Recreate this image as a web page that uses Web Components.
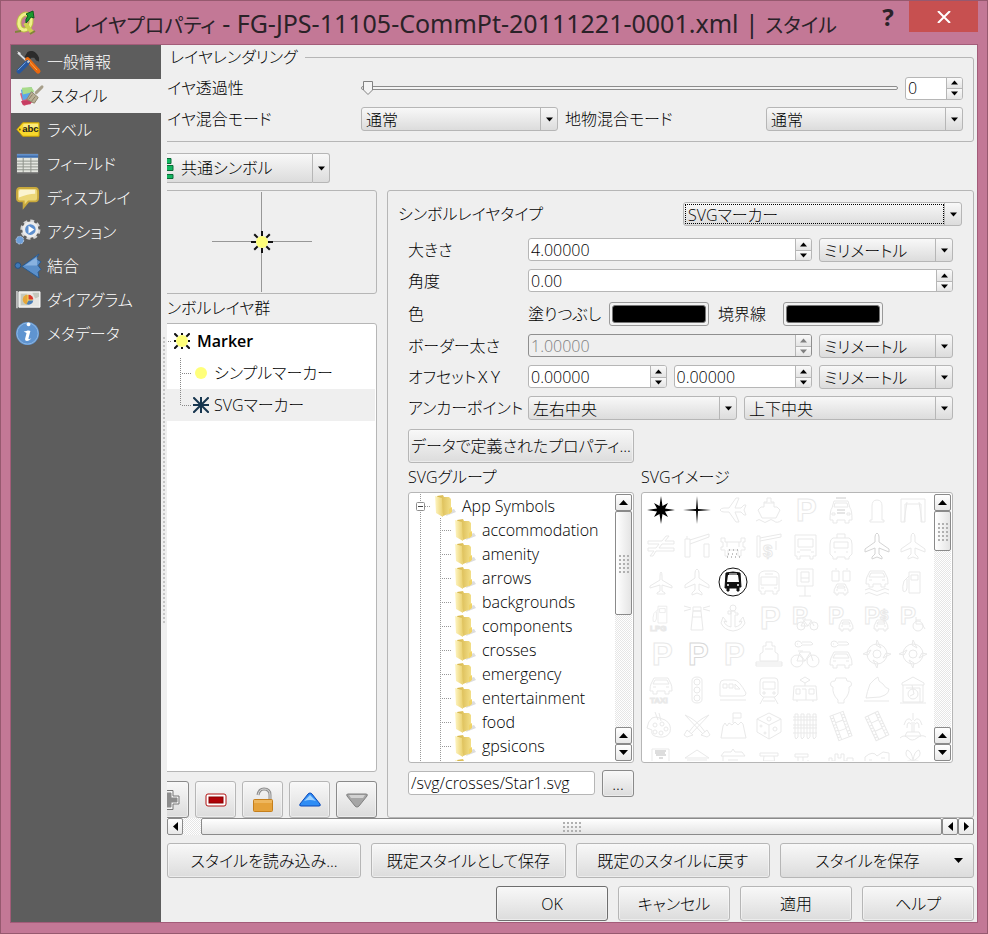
<!DOCTYPE html>
<html lang="ja">
<head>
<meta charset="utf-8">
<title>レイヤプロパティ</title>
<style>
html, body { margin: 0; height: 100%; }
body {
  --line: #b6b6b6;
  --face: #efefef;
  --btn: linear-gradient(#f8f8f8, #dcdcdc);
  font: 16px/24px "Open Sans", "Noto Sans CJK JP", sans-serif;
  font-feature-settings: "palt";
  font-weight: 300;
  color: #000;
}
</style>
</head>
<body>
<app-window></app-window>
<script>
const BASE = `*{box-sizing:border-box} :host{box-sizing:border-box;display:block} :host([hidden]){display:none}
button,input,select{font:inherit;font-feature-settings:inherit;color:inherit;margin:0}
label{white-space:nowrap}`;
function define(name, css, html, setup) {
  customElements.define(name, class extends HTMLElement {
    constructor() {
      super();
      const t = document.createElement('template');
      this.attachShadow({ mode: 'open' });
      t.innerHTML = `<style>${BASE}${css}</style>${typeof html === 'function' ? html(this) : html}`;
      this.shadowRoot.append(t.content.cloneNode(true));
      if (setup) setup(this);
    }
  });
}
const tri = (d, s = 9) => {
  const p = { up: 'M0 5 4.500 0 9 5z', down: 'M0 0H9L4.500 5z' }[d];
  if (p) return `<svg width="${s}" height="5" viewBox="0 0 9 5" aria-hidden="true"><path fill="currentColor" d="${p}"/></svg>`;
  return `<svg width="5" height="9" viewBox="0 0 5 9" aria-hidden="true"><path fill="currentColor" d="${d === 'left' ? 'M5 0V9L0 4.500z' : 'M0 0V9L5 4.500z'}"/></svg>`;
};

/* ---------- basic controls ---------- */
define('ui-button', `
:host{min-width:0}
button{display:flex;align-items:center;justify-content:center;width:100%;height:100%;padding:0 4px;border:1px solid var(--edge,var(--line));border-radius:3px;background:var(--btn);box-shadow:inset 0 0 0 1px #fafafa88;white-space:nowrap}`,
`<button type="button"><slot></slot></button>`, el => {
  const b = el.shadowRoot.querySelector('button');
  if (el.hasAttribute('label')) b.setAttribute('aria-label', el.getAttribute('label'));
});

define('ui-combo', `
:host{display:grid;grid-template-columns:1fr 17px;height:24px;min-width:0;border:1px solid var(--line);border-radius:3px;background:var(--btn)}
::slotted(select){grid-area:1/1/2/3;appearance:none;width:100%;height:22px;border:0;outline:0;background:none;padding:0 20px 0 4px;margin:0;font:inherit;font-feature-settings:inherit;line-height:22px;color:inherit}
:host([focused]) ::slotted(select){outline:1px dotted #000;outline-offset:-2px;width:calc(100% - 16px);padding-right:0}
i{grid-area:1/2;display:flex;align-items:center;justify-content:center;border-left:1px solid var(--line);pointer-events:none}`,
`<slot></slot><i>${tri('down', 7)}</i>`);

define('ui-spin', `
:host{display:grid;grid-template-columns:1fr 16px;height:23px;min-width:0;border:1px solid var(--line);border-radius:3px;background:#fff;overflow:hidden}
:host([disabled]){background:var(--face);border-color:#8f8f8f;color:#808080}
::slotted(input){width:100%;height:21px;min-width:0;border:0;outline:0;background:none;padding:0 2px;margin:0;font:inherit;color:inherit;box-sizing:border-box}
div{display:grid;grid-template-rows:1fr 1fr;border-left:1px solid var(--line)}
button{border:0;padding:0;background:linear-gradient(#fafafa,#e4e4e4);display:flex;align-items:center;justify-content:center;min-height:0}
button+button{border-top:1px solid var(--line)}`,
`<slot></slot><div><button type="button" aria-label="増やす" tabindex="-1">${tri('up', 7)}</button><button type="button" aria-label="減らす" tabindex="-1">${tri('down', 7)}</button></div>`,
el => { if (el.hasAttribute('disabled')) el.shadowRoot.querySelectorAll('button').forEach(b => { b.disabled = true; }); });

define('ui-color', `
:host{width:100px;height:24px}
button{width:100%;height:100%;padding:2px;border:1px solid #9a9a9a;border-radius:3px;background:#f2f2f2;display:flex}
i{flex:1;border-radius:3px;background:#000;border:1px solid #777}`,
el => `<button type="button" aria-label="${el.getAttribute('label')}"><i></i></button>`);

define('scroll-bar', `
:host{display:flex;flex:none;width:17px;flex-direction:column;background:repeating-conic-gradient(#e6e6e6 0 25%,#fff 0 50%) 0 0/2px 2px}
:host([horizontal]){width:auto;height:17px;flex-direction:row}
button{flex:none;width:17px;height:17px;padding:0;border:1px solid #8a8a8a;border-radius:2px;background:linear-gradient(#fff,#e8e8e8);display:flex;align-items:center;justify-content:center}
:host([horizontal]) button{width:16px}
b{flex:0 0 var(--thumb);border:1px solid #8a8a8a;border-radius:2px;background:linear-gradient(90deg,#fff,#e4e4e4);display:flex;align-items:center;justify-content:center}
:host([horizontal]) b{flex:1;margin-left:18px;background:linear-gradient(#fff,#e4e4e4)}
s{width:11px;height:19px;background:radial-gradient(circle,#b0b0b0 1px,transparent 1px) 0 0/4px 4px}
:host([horizontal]) s{width:19px;height:11px}
u{flex:1}`,
el => el.hasAttribute('horizontal')
  ? `<button aria-label="左へ">${tri('left')}</button><b><s></s></b><button aria-label="左へ">${tri('left')}</button><button aria-label="右へ">${tri('right')}</button>`
  : `<button aria-label="上へ">${tri('up')}</button><b><s></s></b><u></u><button aria-label="上へ">${tri('up')}</button><button aria-label="下へ">${tri('down')}</button>`);

/* ---------- sidebar ---------- */
const NAV = {
general: `<path d="M2 3 15 15" stroke="#d8dde2" stroke-width="2"/><path d="M1 1 5 3 4 5z" fill="#eee"/><path d="M12 2C16 0 21 1 24 8L24 12 21 11 19 8 16 8 13 11 9 7z" fill="#2b2b2b"/><path d="M12 10 23 22" stroke="#e8670e" stroke-width="5" stroke-linecap="round"/><path d="M12 10 22 21" stroke="#ffab4d" stroke-width="1"/><path d="M3 22 12 13" stroke="#27579f" stroke-width="5" stroke-linecap="round"/><path d="M2 21 10 13" stroke="#7ea6dc" stroke-width="1"/><path d="M12 13 14 11" stroke="#ccc" stroke-width="2"/>`,
style: `<path d="M1 10 13 6 17 18 5 23z" fill="#dd5f7a"/><path d="M2 6 13 3 16 13 4 17z" fill="#5aa7e8"/><path d="M3 4 13 3 16 8 4 11z" fill="#a9db8a"/><path d="M2 18 14 16 12 21 4 22z" fill="#c73d63"/><path d="M24 3 18 9" stroke="#a79f8a" stroke-width="3" stroke-linecap="round"/><path d="M13 8 20 14 16 20 8 16z" fill="#b9af95" stroke="#8d8468"/><path d="M10 16 14 11M13 18 17 13" stroke="#857c62"/>`,
label: `<path d="M7 5H24V19H7L1 12z" fill="#f8d82c" stroke="#d0a400"/><path d="M8 6H23V10H7z" fill="#fbe97c"/><circle cx="4" cy="12" r="1" fill="#7d6400"/><text x="15" y="15" font-family="Liberation Sans" font-weight="700" font-size="10" text-anchor="middle" fill="#222">abc</text>`,
field: `<path d="M1 2H23V22H1z" fill="#e3e5df"/><path d="M1 2H23V6H1z" fill="#3f6fb0"/><path d="M1 3H23" stroke="#7ea7dc"/><path d="M1 9.500H23M1 12.500H23M1 15.500H23M1 18.500H23M7.500 6V22M15.500 6V22" stroke="#8d918a"/><path d="M1 21.500H23" stroke="#777"/>`,
display: `<path d="M4 2H20Q23 2 23 6V12Q23 16 20 16H13L8 22 8 16H4Q1 16 1 12V6Q1 2 4 2z" fill="#ecd777" stroke="#c9a93c" stroke-width="2"/><path d="M4 4H20V8Q12 8 3 12V6z" fill="#fbf4cf"/>`,
action: `<circle cx="15" cy="10" r="9" fill="none" stroke="#d5d5d5" stroke-width="3" stroke-dasharray="4 3"/><circle cx="15" cy="10" r="7" fill="#5d8fce" stroke="#ececec" stroke-width="3"/><path d="M13 6 19 10 13 14z" fill="#fff"/><circle cx="4" cy="21" r="4" fill="#6f9fd8" stroke="#b8c6d8" stroke-width="1" stroke-dasharray="2 1"/>`,
join: `<path d="M24 0 21 5 26 8 23 12 26 16 23 19 24 25 6 13z" fill="#5b8fc9" stroke="#27598f"/><path d="M22 3 9 12H22z" fill="#9dc1e8" opacity=".7"/><circle cx="2" cy="12" r="3" fill="#3f79b8" stroke="#244f7e"/>`,
diagram: `<path d="M3 4H25V20H3z" fill="#e6e6e2" stroke="#fff"/><path d="M1 3V21" stroke="#bbb" stroke-width="2"/><path d="M5 6H12L9 10 12 18H5zM17 5H24V9L20 11z" fill="#c5c8bd"/><circle cx="12" cy="12" r="5" fill="#f0dc6b"/><path d="M12 7A5 5 0 0 0 12 17z" fill="#e6a63b"/><path d="M13 12V7A5 5 0 0 1 18 12z" fill="#d9382c"/><path d="M13 13H18A5 5 0 0 1 11 17z" fill="#4b7db6"/>`,
meta: `<circle cx="12" cy="12" r="12" fill="#5f94d0"/><circle cx="12" cy="12" r="11" fill="none" stroke="#8fb7e2"/><path d="M13 4.500a2 2 0 1 1 .1 0M8 10C11 9 14 8 15 9.500L13 17C13 19 15 17.500 16 17 14 20 9 21 9.500 17.500L11 11.500z" fill="#fff"/>` };
define('nav-item', `
a{display:flex;align-items:center;gap:7px;height:34px;padding-left:5px;color:#fff;text-decoration:none;white-space:nowrap}
:host([selected]) a{background:var(--face);color:#000;padding-left:8px}
svg{flex:none;overflow:visible}`,
el => `<a href="#${el.getAttribute('icon')}"><svg width="24" height="24" viewBox="0 0 25 25" fill="none">${NAV[el.getAttribute('icon')]}</svg><slot></slot></a>`);
define('side-nav', `:host{background:#5d5d5d;flex:none;width:150px}nav{display:block}`, `<nav>
<nav-item icon="general">一般情報</nav-item><nav-item icon="style" selected>スタイル</nav-item><nav-item icon="label">ラベル</nav-item>
<nav-item icon="field">フィールド</nav-item><nav-item icon="display">ディスプレイ</nav-item><nav-item icon="action">アクション</nav-item>
<nav-item icon="join">結合</nav-item><nav-item icon="diagram">ダイアグラム</nav-item><nav-item icon="meta">メタデータ</nav-item></nav>`);

/* ---------- layer rendering ---------- */
const thumb = "url(\"data:image/svg+xml,%3Csvg xmlns='http://www.w3.org/2000/svg' width='12' height='16'%3E%3Cpath d='M1.500 1.500H10.500V10L6 14.500 1.500 10z' fill='%23f4f4f4' stroke='%23828282' stroke-linejoin='round'/%3E%3C/svg%3E\")";
define('layer-rendering', `
fieldset{margin:0;padding:7px 10px 10px 5px;border:1px solid var(--line);border-radius:3px;min-width:0;display:flex;flex-direction:column;gap:7px}
legend{margin-left:-5px;padding:0 7px 0 22px;height:24px}
.row{display:flex;gap:7px;align-items:center}
.first{width:201px}.second{width:194px}
ui-combo{flex:1}
ui-spin{width:58px}
input[type=range]{flex:1;min-width:0;appearance:none;height:16px;background:none}
input[type=range]::-webkit-slider-runnable-track{height:4px;border:1px solid #8c8c8c;border-radius:2px;background:#f4f4f4}
input[type=range]::-webkit-slider-thumb{appearance:none;width:12px;height:16px;margin-top:-7px;background:${thumb}}`,
`<fieldset><legend>レイヤレンダリング</legend>
<div class="row"><label class="first" for="op">レイヤ透過性</label><input id="op" type="range" value="0"><ui-spin><input aria-label="透過性の値" value="0"></ui-spin></div>
<div class="row"><label class="first" for="lb">レイヤ混合モード</label><ui-combo><select id="lb"><option>通常</option></select></ui-combo>
<label class="second" for="fb">地物混合モード</label><ui-combo><select id="fb"><option>通常</option></select></ui-combo></div></fieldset>`);

define('renderer-picker', `
:host{display:flex;width:183px;height:30px;margin:11px 0 7px}
button{border:1px solid var(--line);background:var(--btn);padding:0;display:flex;align-items:center}
.main{flex:1;border-radius:3px 0 0 3px;gap:6px;padding-left:3px}
.more{width:17px;border-left:0;border-radius:0 3px 3px 0;justify-content:center}`,
`<button class="main"><svg width="24" height="24" viewBox="0 0 24 24"><path d="M1 9H7V15H1zM15 2.500H20V7.500H15zM15 9.500H22V14.500H15zM15 18.500H22V22.500H15z" fill="#12b560" stroke="#0a6b38"/><path d="M8 12H14M11 5V20" stroke="#777"/></svg>共通シンボル</button><button class="more" aria-label="選択">${tri('down', 7)}</button>`);

/* ---------- symbol layers ---------- */
const rays = (ray, r0, r1, w) => `<g stroke="${ray}" stroke-width="${w}">` + [0,45,90,135,180,225,270,315].map(a => `<path d="M0 ${-r0}V${-r1}" transform="rotate(${a})"/>`).join('') + '</g>';
define('symbol-preview', `:host{height:104px;border:1px solid var(--line);border-radius:3px;display:flex;justify-content:center;align-items:center}`,
`<svg width="100" height="102" viewBox="-50 -51 100 102"><path d="M-50 -.500H50M-.500 -50V50" stroke="#979797"/>${rays('#111',6,11,2)}<circle r="6" fill="#ffff7a"/></svg>`);
define('layer-tree', `
:host{border:1px solid var(--line);border-radius:3px;background:#fff;padding:1px}
ul{margin:0;padding:0;list-style:none}
li{display:flex;align-items:center;height:32px;padding-left:17px;gap:5px}
li.root{font-weight:600}
li.on{background:var(--face)}
li:not(.root){gap:3px;padding-left:28px}
svg{flex:none;margin:0}`,
`<ul><li class="root"><svg width="26" height="32" viewBox="-16 -16 26 32"><path d="M-16 .500H-11" stroke="#888" stroke-dasharray="1 1"/><svg x="-8" y="-8" width="16" height="16" viewBox="-8 -8 16 16">${rays('#111',6,11,2)}<circle r="6" fill="#ffff7a"/></svg></svg>Marker</li>
<li><svg width="34" height="32" viewBox="-24 -16 34 32"><path d="M-20.500 -15V16M-19 .500H-10" stroke="#888" stroke-dasharray="1 1"/><circle r="6" fill="#ffff7a"/></svg>シンプルマーカー</li>
<li class="on"><svg width="34" height="32" viewBox="-24 -16 34 32"><path d="M-20.500 -15V1M-19 .500H-10" stroke="#888" stroke-dasharray="1 1"/><svg x="-8" y="-8" width="16" height="16" viewBox="-8 -8 16 16">${rays('#17364f',0,11,2)}</svg></svg>SVGマーカー</li></ul>`);
define('symbol-layers', `
:host{display:flex;flex-direction:column;flex:none;width:230px}
h2{margin:0;font:inherit;line-height:29px;padding-left:5px}
layer-tree{flex:1}
div{display:flex;gap:6px;margin-top:9px;padding-left:1px}
ui-button{flex:1;height:37px}`,
`<symbol-preview></symbol-preview><h2>シンボルレイヤ群</h2><layer-tree></layer-tree>
<div><ui-button label="追加" style="--edge:#8a8a8a"><svg width="24" height="20" viewBox="0 0 24 20"><path d="M8 .500H16V6H22V14H16V19.500H8V14H2V6H8z" fill="#f4f4f4" stroke="#777"/><path d="M10 3H14V8H20V12H14V17H10V12H4V8H10z" fill="#8c8c8c" stroke="#8c8c8c"/></svg></ui-button>
<ui-button label="削除"><svg width="22" height="14"><rect x="1" y="1" width="20" height="12" rx="2" fill="#fff" stroke="#b01010" stroke-width="1"/><rect x="4" y="4" width="14" height="6" fill="#b00007" stroke="#800" /></svg></ui-button>
<ui-button label="ロック"><svg width="22" height="26" viewBox="0 0 22 26"><path d="M6 8Q7 2 12 2 18 2 18 8V13" fill="none" stroke="#8d8d8d" stroke-width="3"/><path d="M6 8Q7 2 12 2 18 2 18 8V13" fill="none" stroke="#ddd"/><rect x="1.500" y="12.500" width="19" height="12" rx="1" fill="#e5a23a" stroke="#c57f1c"/><path d="M2 13H20V16H2z" fill="#eeb75e"/></svg></ui-button>
<ui-button label="上へ"><svg width="24" height="16" viewBox="0 0 24 16"><path d="M12 1Q13 1 14 2L22 12Q23 14 21 14H3Q1 14 2 12L10 2Q11 1 12 1z" fill="#2f8df5" stroke="#0d49b8"/><path d="M12 3 18 9Q12 7 6 9z" fill="#9fd2ff"/></svg></ui-button>
<ui-button label="下へ" style="--edge:#8a8a8a"><svg width="24" height="16" viewBox="0 0 24 16"><path d="M12 15Q11 15 10 14L2 4Q1 2 3 2H21Q23 2 22 4L14 14Q13 15 12 15z" fill="#a6a6a6" stroke="#808080"/><path d="M4 3H20L18 6H6z" fill="#d2d2d2"/></svg></ui-button></div>`);

/* ---------- SVG browser ---------- */
const folder = `<svg width="22" height="24" viewBox="0 0 22 24"><defs><linearGradient id="fg"><stop stop-color="#fff6c4"/><stop offset="1" stop-color="#e9cf6c"/></linearGradient><linearGradient id="fb"><stop stop-color="#d2b044"/><stop offset="1" stop-color="#f3df88"/></linearGradient></defs><path d="M12 22 22 18 20 15 14 17z" fill="#ddd"/><path d="M3 2 9 1 10 3 15 3 17 5V19L9 22z" fill="url(#fb)"/><path d="M1 2 8 4 9 23 2 19z" fill="url(#fg)"/><path d="M15 15 18 13 18 18 15 20z" fill="#f0d468"/></svg>`;
define('svg-groups', `
:host{display:flex;border:1px solid var(--line);border-radius:3px;background:#fff;padding:1px;overflow:hidden;--thumb:104px}
ul{flex:1;min-width:0;margin:0;padding:0;list-style:none;overflow:hidden;height:0;min-height:100%}
li{display:flex;align-items:center;height:24px;white-space:nowrap}
svg{flex:none}
span{margin-left:6px}`,
`<ul><li><svg width="24" height="24" viewBox="0 0 24 24"><path d="M10.500 0V24M15 12.500H21" stroke="#999" stroke-dasharray="1 1"/><rect x="6.500" y="8.500" width="8" height="8" rx="1" fill="#fff" stroke="#8f8f8f"/><path d="M8 12.500H13" stroke="#444"/></svg>${folder}<span>App Symbols</span></li>` +
['accommodation','amenity','arrows','backgrounds','components','crosses','emergency','entertainment','food','gpsicons','health'].map(n =>
`<li><svg width="44" height="24" viewBox="0 0 44 24"><path d="M10.500 0V24M30.500 0V24M32 12.500H41" stroke="#999" stroke-dasharray="1 1"/></svg>${folder}<span>${n}</span></li>`).join('') + `</ul><scroll-bar></scroll-bar>`);

const P = d => `<path d="${d}"/>`;
const T = (t, x, y, s) => `<text x="${x}" y="${y}" font-size="${s}" font-family="Liberation Sans" font-weight="700">${t}</text>`;
const bus = P('M4 3H25V24H22V27H19V24H9V27H6V24H4zM7 7H22V15H7zM9 18H20M6 20H9M20 20H23');
const car = (x, y) => `<g transform="translate(${x} ${y})">${P('M3 1H11L13 5Q14 6 14 10H12V12H10V10H4V12H2V10H0Q0 6 1 5zM4 3H10L11 5H3zM2 7H4M10 7H12')}</g>`;
const bigCar = (y) => `<g transform="translate(0 ${y})">${P('M7 1H21L24 7Q25 9 25 14H22V17H18V14H10V17H6V14H3Q3 9 4 7zM8 3H20L22 7H6zM6 10H9M19 10H22')}</g>`;
const bike = (x, y) => `<g transform="translate(${x} ${y})"><circle cx="5" cy="7" r="4"/><circle cx="18" cy="7" r="4"/>${P('M5 7 8 1H15L18 7M8 2 12 7 15 2M5 7H12M6 0H10')}</g>`;
const bigBike = `<circle cx="6" cy="21" r="6"/><circle cx="22" cy="21" r="6"/>` + P('M6 21 9 12H19L22 21M9 14 14 21 19 13M6 21H14M7 11H12');
const plane = P('M14 1Q16 2 16 5V10L26 17V20L16 16V22L19 25V27L14 25 9 27V25L12 22V16L2 20V17L12 10V5Q12 2 14 1z');
const key = P('M11 4Q10 1 7 1 4 1 4 4T7 7Q10 7 11 5H20L22 4 20 2H11M6 4H7');
const ship = P('M6 11H9V6H12V2H16V6H19V11H22L25 14 21 22H7L3 14zM9 7H19M1 25Q4 22 7 25T13 25T19 25T27 24');
const fuel = (s) => `<g transform="${s}">${P('M10 4H21V25H10zM12 7H19V12H12zM10 8 5 13Q3 19 4 23 7 25 8 20V11')}</g>`;
const train = P('M8 2H20Q23 2 23 6V18L20 21H8L5 18V6Q5 2 8 2zM8 6H20V13H8zM8 16H10V18H8zM18 16H20V18H18zM9 21 5 28M19 21 23 28M8 25H20');
const compass = `<circle cx="14" cy="14" r="10"/><circle cx="14" cy="14" r="4"/>` + P('M14 0 18 8 13 5zM14 28 10 20 15 23zM0 14 8 10 5 15zM28 14 20 18 23 13z');
const film = a => `<g transform="rotate(${a} 14 14)">${P('M7 1H21V27H7zM10 1V27M18 1V27M10 9H18M10 18H18M7 4H10M7 7H10M7 11H10M7 14H10M7 17H10M7 21H10M7 24H10M18 4H21M18 7H21M18 11H21M18 14H21M18 17H21M18 21H21M18 24H21')}</g>`;
const bigP = T('P', 5, 25, 31);
const ICONS = [
 `<path fill="#000" stroke="none" d="M14 0 15.500 10 21 7 18 12.500 28 14 18 15.500 21 21 15.500 18 14 28 12.500 18 7 21 10 15.500 0 14 10 12.500 7 7 12.500 10z"/>`,
 `<path fill="#000" stroke="none" d="M14 0 15 13 28 14 15 15 14 28 13 15 0 14 13 13z"/>`,
 `<g transform="rotate(-90 14 14)">${plane}</g>`, ship, bigP,
 P('M7 5H21L23 12Q25 14 25 24H22V27H18V24H10V27H6V24H3Q3 14 5 12zM8 7H20L21 11H7zM5 17H8V19H5zM20 17H23V19H20z') + `<path d="M9 2H19M10 14H18M10 17H18" stroke="#ccc"/>`,
 P('M9 24V10Q9 4 14 4T19 10V24H21V26H7V24z'), P('M2 3H26V26H22V8H6V26H2zM8 6 5 26M20 6 23 26'),
 P('M1 9H15L19 4H22L18 9H27V12H15L12 16H27V19H9L6 24H3L7 19H1V16H9L12 12H1z'), P('M2 7H7V25H2zM7 8 26 2V5L7 12M21 12H26V25H21zM4 4V7'),
 P('M2 6H6V10H22V6H26V10H24V15H26V18H22V24H19V18H9V24H6V18H2V15H4V10H2zM8 10V15M20 10V15') + `<path d="M10 18H19M9 22H20M8 25H21" stroke="#888" stroke-dasharray="1 3"/>`, P('M2 4H5V25H2zM5 6 26 2V5L5 9M21 9V18') + T('$',8,25,17),
 bus, P('M6 6H22Q25 7 25 12V22L22 25V27H18V25H10V27H6V25L3 22V12Q3 7 6 6zM10 6V2H18V6M7 10H21V16H7zM7 20H9M19 20H21'),
 `<g stroke="#d4d4d4">${plane}</g>`, plane,
 P('M14 4Q15 5 15 8V12L25 18V20L15 17V23L18 25V26H10V25L13 23V17L3 20V18L13 12V8Q13 5 14 4z'), plane,
 `<g stroke="#111"><circle cx="14" cy="14" r="14" fill="#fff" stroke-width="1"/><path fill="#111" d="M7 5Q14 3 21 5L22 19H20V23H18V20H10V23H8V20H6z"/><path fill="#fff" stroke="none" d="M9 7H19L20 14H8z"/><path fill="#888" stroke="none" d="M10 5H18V7H10z"/><circle cx="9" cy="17" r="1" fill="#fff" stroke="none"/><circle cx="19" cy="17" r="1" fill="#fff" stroke="none"/></g>`,
 P('M4 8Q4 4 9 3H19Q24 4 24 8V23H22V26H18V23H10V26H6V23H4zM6 9H22V17H6zM10 6H18M6 20H9M19 20H22'), P('M6 1H22V18H6zM10 4H18V14H10zM10 10H18M14 18V28M8 28H20'),
 P('M5 3H12V13H5zM16 3H23V13H16zM8 1H10M19 1H21') + car(7, 15), bigCar(2) + P('M2 22Q6 19 10 22T18 22T26 22M2 26Q6 23 10 26T18 26T26 26'), fuel(''),
 fuel('translate(3 -1) scale(.8)') + T('LPG',3,27,8), P('M10 7H18L20 26H8zM10 3H18V7H10zM1 2 8 4M27 2 20 4M1 7 8 5M27 7 20 5M9 13H19'),
 P('M12 7V23Q6 22 5 17L8 18 4 13 2 19Q5 26 14 27 23 26 26 19L24 13 20 18 23 17Q22 22 16 23V11H19V9H16V7H9V10H12z') + '<circle cx="14" cy="4" r="3"/>', bigP,
 T('P',1,20,24) + bike(5, 15), T('P',1,20,24) + car(12, 15), T('P',1,20,24) + T('$',17,16,15) + car(11, 15), T('P',1,20,24) + '<circle cx="19" cy="22" r="5"/>' + P('M17 13V20H23L26 25M17 16H22'),
 bigP, `<g stroke="#d8d8d8">${bigP}</g>`, bigP, P('M11 2H17V6H20V12L23 14V21H5V14L8 12V6H11zM1 22H27V26H1zM10 9H18M1 24H27'), key + bigBike, key + bigCar(11), compass, compass,
 bigCar(1) + T('TAXI',3,27,8), P('M9 5Q9 1 14 1T19 5V23Q19 27 14 27T9 23z') + '<circle cx="14" cy="6" r="3"/><circle cx="14" cy="14" r="3"/><circle cx="14" cy="22" r="3"/>',
 P('M1 8Q1 4 5 4H15Q20 4 27 17 27 20 24 20H1zM4 8H8V12H4zM10 8H14V12H10zM16 8 21 13H16zM1 24H27'), train, P('M14 1 19 4 14 7 9 4zM3 10H25L26 24H2zM5 13H9V18H5zM11 13H15V24M18 13H23V18H18zM6 24V26M22 24V26M14 7V10'),
 P('M9 2H19L20 5Q26 5 24 10L22 11Q23 18 17 24V27H11V24Q5 18 6 11L4 10Q2 5 8 5z'), P('M3 22Q4 16 7 8L12 3 15 1 16 5 20 8Q22 12 26 13 26 17 22 19L17 21zM1 25H26'),
 P('M3 7 14 1 25 7V9H3zM4 9V26H24V9M7 12H21V26M1 27H27') + '<circle cx="14" cy="18" r="5"/>' + P('M13 9 15 18 11 20'),
 P('M5 6 9 5Q13 6 18 8 25 12 23 20 20 26 12 25 3 24 5 18L0 16Q1 9 5 6zM8 0 11 8M12 1 14 9') + '<circle cx="8" cy="13" r="2"/><circle cx="15" cy="12" r="2"/><circle cx="19" cy="17" r="2"/><circle cx="14" cy="21" r="2"/><circle cx="8" cy="20" r="2"/>',
 P('M2 3Q14 8 22 20M2 3 20 22M26 3Q14 8 6 20M26 3 8 22M18 23 24 18 27 23 24 25zM10 23 4 18 1 23 4 25z'), P('M2 26 4 14 6 11 8 14 10 11 13 13 16 10 19 13 22 10 24 12 27 26zM14 11V1H22V6H14'),
 P('M14 1 26 7V20L14 27 2 20V7zM2 7 14 13 26 7M14 13V27') + '<circle cx="14" cy="7" r="2"/><circle cx="6" cy="14" r="1"/><circle cx="10" cy="21" r="1"/><circle cx="20" cy="17" r="2"/>',
 P('M4 2H7V25L5 27 4 25zM10 2H13V25L11 27 10 25zM16 2H19V25L17 27 16 25zM22 2H25V25L23 27 22 25zM2 5H26M2 8H26M2 13H26M2 16H26M2 21H26'), film(-20), film(-25),
 P('M13 10V20M15 10V20M14 1V8M13 9Q8 3 5 13M12 12Q8 8 8 16M15 9Q20 3 23 13M16 12Q20 8 20 16M8 20H20L22 24H6zM1 26Q5 22 9 26T18 26T27 25'),
 P('M5 1H22V28H5z') + `<path d="M8 3H19M8 5H18M9 7H19M12 10H16" stroke="#bbb"/>`, P('M2 10 14 2 26 10H2zM4 12H24M6 13V27M10 13V27M14 13V27M18 13V27M22 13V27'), P('M2 8 5 4H12L14 1 16 4H23L26 8H2zM4 8V27M9 12H19'), P('M5 5H23V8H5zM9 8 7 27M19 8 21 27M8 13H20'),
 P('M4 6H17V9H4zM7 9V27M12 9V27M16 13H18'), P('M2 14V10H5V13H8V6H11V10H14V6H17V13H20V10H26V27H2z'), P('M2 9Q10 2 14 8L20 4 26 5V20Q18 25 14 16 8 21 2 18zM6 12H9M18 10H22'), P('M14 13Q4 8 8 2 13 3 14 13 15 3 20 2 24 8 14 13 22 12 24 17 19 19 14 13 6 12 4 17 9 19 14 13z')
];
define('svg-images', `
:host{display:flex;border:1px solid var(--line);border-radius:3px;background:#fff;padding:1px;overflow:hidden;--thumb:40px}
div{flex:1;min-width:0;height:0;min-height:100%;overflow:hidden;display:grid;grid-template-columns:repeat(auto-fill,36px);grid-auto-rows:36px;align-content:start}
svg{margin:2px 4px;overflow:visible;fill:none;stroke:#e9e9e9}`,
`<div role="list">${ICONS.map(i => `<svg role="listitem" width="28" height="28" viewBox="0 0 28 28">${i}</svg>`).join('')}</div><scroll-bar></scroll-bar>`);
define('svg-browser', `
:host{display:grid;grid-template-columns:226px 1fr;grid-template-rows:29px 1fr 34px;column-gap:7px;flex:1}
h3{margin:0;font:inherit;line-height:29px}
.path{grid-column:1/3;display:flex;gap:7px;padding-top:7px}
input{width:187px;height:24px;margin-top:1px;padding:0 2px;border:1px solid var(--line);border-radius:3px;background:#fff}
ui-button{width:32px;height:27px;--edge:#8a8a8a}`,
`<h3>SVGグループ</h3><h3>SVGイメージ</h3><svg-groups></svg-groups><svg-images></svg-images>
<div class="path"><input aria-label="SVGファイル" value="/svg/crosses/Star1.svg"><ui-button label="参照">...</ui-button></div>`);

/* ---------- layer form ---------- */
const unit = (l) => `<ui-combo class="unit"><select aria-label="${l}の単位"><option>ミリメートル</option></select></ui-combo>`;
define('layer-form', `
:host{display:flex;flex-direction:column;flex:1;min-width:0;border:1px solid var(--line);border-radius:3px;padding:11px 11px 20px 10px}
.type{display:flex;justify-content:space-between;margin-bottom:12px}
.type ui-combo{width:279px}
form{display:flex;flex-direction:column;gap:7px;flex:1;margin:0 9px 0 10px}
.row{display:flex;gap:7px;height:24px}
.row>.l{flex:none;width:113px}
.row>ui-spin,.row>ui-combo{flex:1}
.row>.unit{flex:none;width:134px}
.color{height:27px;align-items:center}
.color .l+span{width:74px}.color span:nth-of-type(3){margin-left:2px;width:58px}
.color span{white-space:nowrap}
.wide{width:226px;height:34px;margin-top:2px;margin-bottom:-7px;flex:none}`,
`<div class="type"><label for="t">シンボルレイヤタイプ</label><ui-combo focused><select id="t"><option>SVGマーカー</option></select></ui-combo></div>
<form>
<div class="row"><label class="l" for="a">大きさ</label><ui-spin><input id="a" value="4.00000"></ui-spin>${unit('大きさ')}</div>
<div class="row"><label class="l" for="b">角度</label><ui-spin><input id="b" value="0.00"></ui-spin></div>
<div class="row color"><span class="l">色</span><span>塗りつぶし</span><ui-color label="塗りつぶし"></ui-color><span>境界線</span><ui-color label="境界線"></ui-color></div>
<div class="row"><label class="l" for="c">ボーダー太さ</label><ui-spin disabled><input id="c" value="1.00000" disabled></ui-spin>${unit('ボーダー太さ')}</div>
<div class="row"><label class="l" for="d">オフセットＸＹ</label><ui-spin><input id="d" value="0.00000"></ui-spin><ui-spin><input aria-label="オフセットＹ" value="0.00000"></ui-spin>${unit('オフセット')}</div>
<div class="row"><label class="l" for="e">アンカーポイント</label><ui-combo><select id="e"><option>左右中央</option></select></ui-combo><ui-combo><select aria-label="上下アンカー"><option>上下中央</option></select></ui-combo></div>
<ui-button class="wide">データで定義されたプロパティ...</ui-button>
<svg-browser></svg-browser>
</form>`);

/* ---------- page and window ---------- */
define('menu-button', `
:host{flex:1;height:35px;min-width:0}
button{display:grid;grid-template-columns:1fr 16px;align-items:center;width:100%;height:100%;padding:0 3px 0 0;border:1px solid var(--line);border-radius:3px;background:var(--btn);white-space:nowrap}`,
`<button aria-haspopup="menu"><span><slot></slot></span>${tri('down')}</button>`);
define('style-page', `
:host{display:flex;flex-direction:column;flex:1;min-width:0;padding:0 3px 1px 0}
.view{flex:1;overflow:hidden;display:flex;flex-direction:column}
.inner{flex:1;margin-left:-20px;display:flex;flex-direction:column}
.cols{flex:1;display:flex;gap:10px}
.actions{display:flex;gap:10px;margin:8px 0}
.actions ui-button{flex:1;height:35px}
.dialog{display:flex;justify-content:flex-end;gap:10px}
.dialog ui-button{width:112px;height:35px}`,
`<div class="view"><div class="inner"><layer-rendering></layer-rendering><renderer-picker></renderer-picker><div class="cols"><symbol-layers></symbol-layers><layer-form></layer-form></div></div></div>
<scroll-bar horizontal></scroll-bar>
<div class="actions"><ui-button>スタイルを読み込み...</ui-button><ui-button>既定スタイルとして保存</ui-button><ui-button>既定のスタイルに戻す</ui-button><menu-button>スタイルを保存</menu-button></div>
<div class="dialog"><ui-button style="--edge:#6e6e6e">OK</ui-button><ui-button>キャンセル</ui-button><ui-button>適用</ui-button><ui-button>ヘルプ</ui-button></div>`);
define('split-grip', `:host{flex:none;width:6px;padding:292px 2px 0}
i{display:block;width:2px;height:288px;background:linear-gradient(#c4c4c4 50%,transparent 0) 0 0/2px 4px}`, `<i></i>`);
define('title-bar', `
:host{display:flex;height:44px;flex:none;color:#2a2228;font:25px/44px "Noto Sans","Noto Sans CJK JP",sans-serif;font-feature-settings:"palt";border-bottom:1px solid #a35c79}
svg.logo{margin:9px 0 0 5px;flex:none}
h1{font:inherit;font-weight:400;margin:0 0 0 34px;flex:1;white-space:nowrap;min-width:0}
small{font-size:20px}
button{border:0;background:none;padding:0;flex:none;height:31px;display:flex;align-items:center;justify-content:center}
.help{width:42px;font:700 24px/31px "Noto Sans",sans-serif}
.close{width:69px;background:#c75050}`,
`<svg class="logo" width="24" height="26" viewBox="0 0 24 26"><ellipse cx="10" cy="12" rx="6" ry="8" fill="none" stroke="#b9bd45" stroke-width="5" transform="rotate(15 10 12)"/><ellipse cx="10" cy="12" rx="6" ry="8" fill="none" stroke="#eff08a" stroke-width="3" transform="rotate(15 10 12)"/><path d="M10 13 15 20 18 23" stroke="#cdd04e" stroke-width="4"/><path d="M0 22 6 21M15 24 20 21" stroke="#80843a" stroke-width="2"/><path d="M18 1 19 8 16 7Q14 10 11 13 10 9 13 6L11 4z" fill="#1a9a2e" stroke="#0d5d1c" stroke-width="1"/></svg>
<h1><small>レイヤプロパティ</small> - FG-JPS-11105-CommPt-20111221-0001.xml | <small>スタイル</small></h1>
<button class="help" aria-label="ヘルプ">?</button><button class="close" aria-label="閉じる"><svg width="14" height="12" viewBox="0 0 14 12"><path d="M1 0 13 12M13 0 1 12" stroke="#fff" stroke-width="2"/></svg></button>`);
define('app-window', `
:host{display:flex;flex-direction:column;min-height:100vh;background:#c37896;border:1px solid #96596f;padding:0 9px 10px}
main{flex:1;display:flex;background:var(--face);border:1px solid #a35c79;border-top:0}`,
`<title-bar></title-bar><main><side-nav></side-nav><split-grip></split-grip><style-page></style-page></main>`);
</script>
</body>
</html>
